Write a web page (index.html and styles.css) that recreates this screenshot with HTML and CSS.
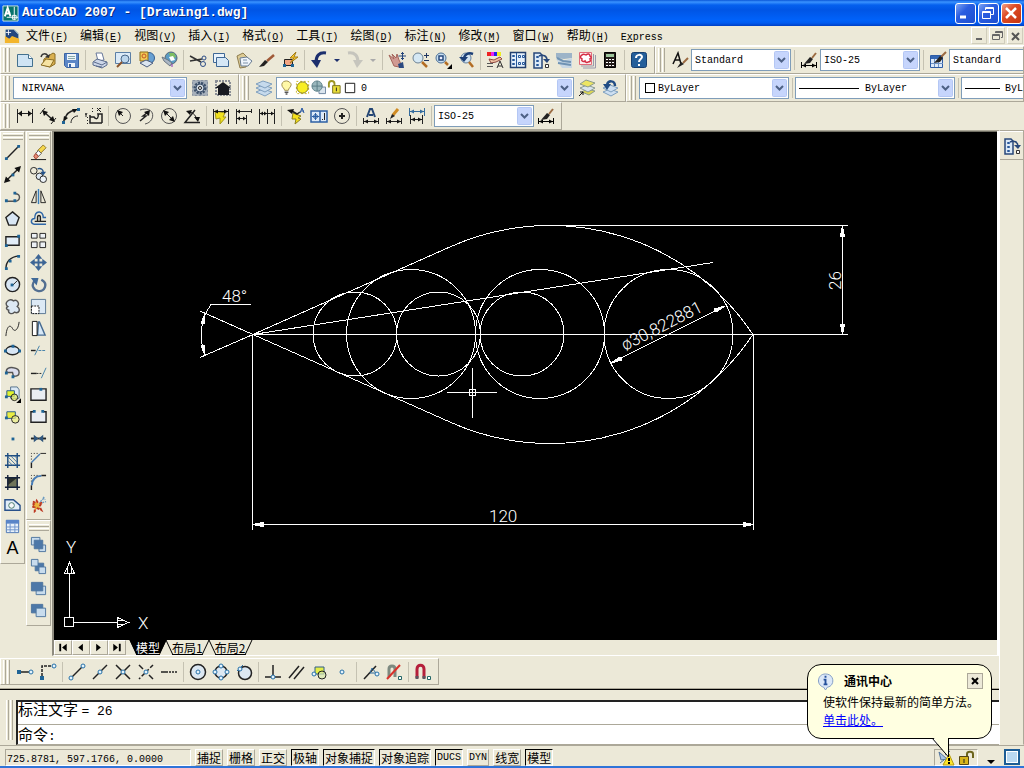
FILE: index.html
```html
<!DOCTYPE html>
<html lang="zh-CN">
<head>
  <meta charset="UTF-8">
  <meta name="viewport" content="width=device-width, initial-scale=1.0">
  <title>AutoCAD 2007 - [Drawing1.dwg]</title>
  <link rel="stylesheet" href="styles.css">
</head>
<body>
  <!-- Title bar -->
  <header class="titlebar">
    <svg class="app-icon" viewBox="0 0 18 18"><path fill="#08736c" stroke="#d7e9e4" d="M1 1h16v16H1z"/><path stroke="#fff" stroke-width="2" d="M3 12 6 3l3 9M4 9h5"/><path stroke="#fff" d="M13 2v14M5 13h12M11 11h4v4h-4z"/></svg>
    <h1>AutoCAD 2007 - [Drawing1.dwg]</h1>
    <div class="window-buttons">
      <button title="最小化"><svg viewBox="0 0 18 18"><path stroke="#fff" stroke-width="3" d="M4 13h6"/></svg></button>
      <button title="还原"><svg viewBox="0 0 18 18"><path stroke="#fff" d="M6.500 6V3.500h8v7H12M3.500 7.500h8v7h-8zM4 8.500h7M7 4.500h7"/></svg></button>
      <button class="close" title="关闭"><svg viewBox="0 0 18 18"><path stroke="#fff" stroke-width="2.500" d="m4 4 10 10M14 4 4 14"/></svg></button>
    </div>
  </header>

  <!-- Menu bar -->
  <nav class="menubar">
    <svg class="doc-icon" viewBox="0 0 18 18"><path fill="#fff" stroke="#9bb" d="M2 2h10l4 4v10H2z"/><path fill="#23477f" stroke="none" d="M2 2h9l5 5v5l-7-1-7 3z"/><path fill="#f3b52c" stroke="none" d="M1 17V9l5 3 3-3 8 3v5z"/><path stroke="#fff" d="M5 2v6M2 5h6"/></svg>
    <button>文件<span>(<u>F</u>)</span></button>
    <button>编辑<span>(<u>E</u>)</span></button>
    <button>视图<span>(<u>V</u>)</span></button>
    <button>插入<span>(<u>I</u>)</span></button>
    <button>格式<span>(<u>O</u>)</span></button>
    <button>工具<span>(<u>T</u>)</span></button>
    <button>绘图<span>(<u>D</u>)</span></button>
    <button>标注<span>(<u>N</u>)</span></button>
    <button>修改<span>(<u>M</u>)</span></button>
    <button>窗口<span>(<u>W</u>)</span></button>
    <button>帮助<span>(<u>H</u>)</span></button>
    <button><span>E<u>x</u>press</span></button>
    <div class="doc-buttons">
      <button title="最小化"><svg viewBox="0 0 14 14"><path stroke="#666" stroke-width="2" d="M4 10h6"/></svg></button>
      <button title="还原"><svg viewBox="0 0 14 14"><path stroke="#666" d="M5.500 4V2.500h7v6H11M2.500 5.500h7v5h-7zM3 6.500h6M6 3.500h6"/></svg></button>
      <button title="关闭"><svg viewBox="0 0 14 14"><path stroke="#555" stroke-width="2" d="m4 4 7 7M11 4l-7 7"/></svg></button>
    </div>
  </nav>

  <!-- Standard and styles toolbars -->
  <div class="toolbar-row">
    <div class="toolbar">
      <i class="grip"></i>
      <button title="新建"><svg viewBox="0 0 18 18"><path fill="#cfe4f4" stroke="#44718f" d="M1.500 3.500h11l4 4v8h-15z"/><path fill="#fff" stroke="#44718f" d="M12.500 3.500v4h4"/></svg></button>
      <button title="打开"><svg viewBox="0 0 18 18"><path fill="#d9b050" stroke="#8a6c22" d="m5 8 9-6 2 1v10l-5 3-7-2z"/><path fill="#f6e3a2" stroke="#8a6c22" d="m2 14 5-6 8 1-4 7z"/><path stroke="#333" stroke-width="1.500" d="M2 6c1-4 5-4 7-1"/><path fill="#333" stroke="none" d="m6 6 4 1 1-4z"/></svg></button>
      <button title="保存"><svg viewBox="0 0 18 18"><path fill="#5b86c6" stroke="#3a64a4" d="M2.500 2.500h14v14h-12l-2-2z"/><path fill="#eef4fa" stroke="none" d="M5 3h9v6H5zM6 12h7v4H6z"/><path stroke="#8aa" d="M6 5.500h7M6 7.500h7"/><path fill="#3a64a4" stroke="none" d="M7 13h2v3H7z"/></svg></button>
      <i class="sep"></i>
      <button title="打印"><svg viewBox="0 0 18 18"><path fill="#fff" stroke="#68789a" d="m5 2 6 0 2 7-6 1z"/><path fill="#ccd6e8" stroke="#5b6c8d" d="m2 11 4-3 10 3v3l-5 3-9-3z"/><path stroke="#5b6c8d" d="m3 11 8 3 5-3M5 15l6 1"/></svg></button>
      <button title="打印预览"><svg viewBox="0 0 18 18"><path fill="#dbeaf7" stroke="#5b7fa6" d="M1.500 1.500h15v11h-15z"/><circle cx="11" cy="8" r="4" fill="#bcd6ec" stroke="#48678a"/><path stroke="#8b542c" stroke-width="2" d="m8 11-5 5"/></svg></button>
      <button title="发布"><svg viewBox="0 0 18 18"><circle cx="12" cy="7" r="5.500" fill="#68a0d2" stroke="#345f92"/><path fill="#f2ca55" stroke="#8c6c1b" d="M3 1h8v9H3z"/><circle cx="7" cy="5" r="2" stroke="#c55525"/><path fill="#dbe5f0" stroke="#4d5f80" d="m3 12 6-3 7 3-6 4z"/></svg></button>
      <button title="三维 DWF"><svg viewBox="0 0 18 18"><circle cx="11" cy="7" r="6" fill="#5b9cc4" stroke="#567"/><path fill="#7ebd62" stroke="none" d="M9 2h5l2 4-5 2z"/><path fill="#fff" stroke="none" d="m9 6 4-1 2 4-4 1z"/><path fill="#aab6c4" stroke="#6d7782" d="m2 6 6 3 4 3-2 3-6-5z"/><path stroke="#83b" d="M12 13v3"/></svg></button>
      <i class="sep"></i>
      <button title="剪切"><svg viewBox="0 0 18 18"><path stroke="#333" stroke-width="1.500" d="m1 5 11 6M1 10l12-2"/><circle cx="15" cy="7" r="2" stroke="#2b4c86"/><circle cx="14" cy="13" r="2.500" stroke="#2b4c86"/></svg></button>
      <button title="复制"><svg viewBox="0 0 18 18"><path fill="#eaf3fb" stroke="#3f6896" d="M1.500 2.500h11v9h-11z"/><path fill="#d5e7f6" stroke="#3f6896" d="M4.500 6.500h9l3 3v6h-12z"/></svg></button>
      <button title="粘贴"><svg viewBox="0 0 18 18"><path fill="#ddcb94" stroke="#8e7c4d" d="m2 5 6-3 6 6-3 8-6 1z"/><path fill="#eef4fb" stroke="#697c92" d="m5 7 7-1 5 4-4 5-7 0z"/><path stroke="#7d91a8" d="m8 9 4 0M8 12l5 0"/></svg></button>
      <button title="特性匹配"><svg viewBox="0 0 18 18"><path stroke="#a05a38" stroke-width="2.500" d="m9 10 7-6"/><path fill="#222" stroke="none" d="m1 16 6-7 3 2-4 4z"/></svg></button>
      <button title="块编辑器"><svg viewBox="0 0 18 18"><path fill="#f2a583" stroke="#222" d="M3.500 8.500h8v6h-8z"/><path fill="#ffd02c" stroke="#a37b16" d="m15 1-6 6h4l-4 5 8-6h-4z"/><path class="node" d="M2 13h3v3H2zM10 13h3v3h-3z"/></svg></button>
      <i class="sep"></i>
      <button title="放弃"><svg viewBox="0 0 18 18"><path stroke="#1c2f6d" stroke-width="3" d="M16 2C9 1 6 5 6 11"/><path fill="#1c2f6d" stroke="none" d="M1 9h10l-4 8z"/></svg></button>
      <button class="drop" title="放弃列表"><svg viewBox="0 0 13 18"><path fill="#1c2f6d" stroke="none" d="M4 8h6L7 11z"/></svg></button>
      <button title="重做"><svg viewBox="0 0 18 18"><path stroke="#c6c5bd" stroke-width="3" d="M2 2c7-1 10 3 10 9"/><path fill="#c6c5bd" stroke="none" d="M7 9h10l-6 8z"/></svg></button>
      <button class="drop" title="重做列表"><svg viewBox="0 0 13 18"><path fill="#aaa" stroke="none" d="M4 8h6L7 11z"/></svg></button>
      <i class="sep"></i>
      <button title="实时平移"><svg viewBox="0 0 18 18"><path fill="#d09a92" stroke="#a5655c" d="m1 4 5 4-2-5 4 4 1-4 2 6 2 4-2 3-5-1z"/><path stroke="#24457b" d="M14.500 1v8M10.500 5h8M13 2.500h3M13 7.500h3"/><path fill="#2c4a80" stroke="none" d="m10 13 5-2 1 6h-5z"/></svg></button>
      <button title="实时缩放"><svg viewBox="0 0 18 18"><circle cx="7" cy="7" r="5" fill="#d5e8f4" stroke="#6c8294"/><path stroke="#b36d24" stroke-width="2.500" d="m11 11 5 5"/><path stroke="#1e3460" d="M15.500 2v5M13 4.500h5M13 9.500h5"/></svg></button>
      <button title="窗口缩放"><svg viewBox="0 0 18 18"><circle cx="7" cy="7" r="5" fill="#c9dff0" stroke="#4a6e95"/><path fill="#eef" stroke="#26497c" stroke-width="1.500" d="M5 5h4v4H5z"/><path stroke="#b36d24" stroke-width="2.500" d="m11 11 3 3"/><path fill="#000" stroke="none" d="M18 13v5h-5z"/></svg></button>
      <button title="缩放上一个"><svg viewBox="0 0 18 18"><circle cx="9" cy="7" r="5" fill="#d4e5f2" stroke="#65829f"/><path stroke="#1c3f77" stroke-width="2.500" d="M16 3C11 1 7 4 7 8"/><path fill="#1c3f77" stroke="none" d="M2 6h9l-4 5z"/><path stroke="#b36d24" stroke-width="2.500" d="m12 11 4 5"/></svg></button>
      <i class="sep"></i>
      <button title="特性"><svg viewBox="0 0 18 18"><path fill="#e22" stroke="none" d="M1 1h4v4H1z"/><path fill="#e2e" stroke="none" d="M5 1h3v4H5z"/><path fill="#22e" stroke="none" d="M8 1h3v4H8z"/><path fill="#ee2" stroke="none" d="M11 1h4v4h-4z"/><path fill="#efc2a2" stroke="#8f4740" d="m3 8 5 1 6-3 2 2-6 3-5 1z"/><path stroke="#555" d="M1 12.500h6M1 15.500h6"/><path stroke="#333" d="m11 17 3-7 3 7M12 15h4"/></svg></button>
      <button title="设计中心"><svg viewBox="0 0 18 18"><path fill="#e5f0fb" stroke="#23406f" stroke-width="1.500" d="M1.500 1.500h15v15h-15z"/><path stroke="#24579b" d="M7.500 2v14M3.500 4.500h2v1h-2zM3.500 8.500h2v1h-2zM3.500 12.500h2v1h-2zM9.500 4.500h2v2h-2zM13.500 4.500h2v2h-2zM9.500 11.500h2v2h-2zM13.500 11.500h2v2h-2z"/></svg></button>
      <button title="工具选项板"><svg viewBox="0 0 18 18"><path fill="#dceaf7" stroke="#28487a" stroke-width="1.500" d="M2 2h6l2 2v13H2z"/><path stroke="#28589a" d="M4.500 5.500h2v1h-2zM4.500 9.500h2v1h-2zM4.500 13.500h2v1h-2z"/><path stroke="#28487a" stroke-width="1.500" d="M7 5c4-2 8 0 8 4"/><path fill="#28487a" stroke="none" d="M11 8h7l-3 4z"/><path fill="#fff" stroke="#333" d="M13.500 13.500h3v3h-3z"/></svg></button>
      <button title="图纸集管理器"><svg viewBox="0 0 18 18"><path fill="#9db4c8" stroke="none" d="M1 2h16v5l-8 1-8-1z"/><path fill="#c8d7e4" stroke="none" d="m1 8 6 2 10-3v10H7z"/><path stroke="#6f93b4" stroke-width="2" d="m2 7 6 3 8 1M3 12l13 2"/></svg></button>
      <button title="标记集管理器"><svg viewBox="0 0 18 18"><path stroke="#99a" d="M17.500 4v13H5M15.500 3v12H3"/><path fill="#fbeced" stroke="#e06a78" d="M1.500 1.500h12v12h-12z"/><path fill="#fff" stroke="#d42c42" stroke-width="1.500" d="M4 4c2-2 3 0 4 0 2-2 4-1 4 1 2 1 1 3 0 3 1 2 0 3-2 3-1 1-3 0-3-1-2 1-4 0-3-2-2-1-2-3 0-4z"/></svg></button>
      <button title="快速计算器"><svg viewBox="0 0 18 18"><path fill="#221a18" stroke="#000" d="M3.500 1.500h11v15h-11z"/><path fill="#9dc49a" stroke="none" d="M5 3h8v3H5z"/><path stroke="#fff" stroke-dasharray="2 1" d="M5 8.500h8M5 11.500h8M5 14.500h8"/></svg></button>
      <i class="sep"></i>
      <button title="帮助"><svg viewBox="0 0 18 18"><rect x="1.500" y="1.500" width="15" height="15" rx="2" fill="#245f9a" stroke="#163f70"/><path stroke="#fff" stroke-width="2" d="M6 7c0-4 6-4 6-1 0 2-3 2-3 5M9 13v2"/></svg></button>
    </div>
    <div class="toolbar grow">
      <i class="grip"></i>
      <button title="文字样式"><svg viewBox="0 0 18 18"><path stroke="#111" stroke-width="1.500" d="m2 13 5-11 3 11M4 9h5"/><path stroke="#9b6a41" stroke-width="2" d="m17 7-5 5"/><path fill="#222" stroke="none" d="m6 17 4-6 3 2z"/></svg></button>
      <select class="w100" aria-label="文字样式"><option>Standard</option></select>
      <i class="sep"></i>
      <button title="标注样式"><svg viewBox="0 0 18 18"><path stroke="#9b6a41" stroke-width="2" d="m16 2-4 5"/><path fill="#222" stroke="none" d="m4 13 6-7 3 2-3 4z"/><path stroke="#000" d="M1.500 11v6M16.500 11v6M2 14.500h14"/><path fill="#000" stroke="none" d="m2 14.500 4-2v4zM16 14.500l-4-2v4z"/></svg></button>
      <select class="w100" aria-label="标注样式"><option>ISO-25</option></select>
      <i class="sep"></i>
      <button title="表格样式"><svg viewBox="0 0 18 18"><path fill="#dceafa" stroke="#2d5ca5" d="M1.500 4.500h12v12h-12z"/><path fill="#3568b5" stroke="none" d="M2 5h11v3H2z"/><path stroke="#6d92c5" d="M2 12.500h12M5.500 8v8M9.500 8v8"/><path stroke="#9b6a41" stroke-width="2" d="m17 1-5 5"/><path fill="#222" stroke="none" d="m5 12 6-7 3 2-3 4z"/></svg></button>
      <select class="w100" aria-label="表格样式"><option>Standard</option></select>
    </div>
  </div>

  <!-- Workspaces, layers and properties toolbars -->
  <div class="toolbar-row">
    <div class="toolbar">
      <i class="grip"></i>
      <select class="w174" aria-label="工作空间"><option>NIRVANA</option></select>
      <button class="after-field" title="工作空间设置"><svg viewBox="0 0 18 18"><path fill="#a5afba" stroke="#8b95a2" stroke-dasharray="3 1" d="M1.500 1.500h15v15h-15z"/><circle cx="9" cy="9" r="5" stroke="#3b4f69" stroke-width="3" stroke-dasharray="2 1"/><circle cx="9" cy="9" r="4" fill="#cfd8e2" stroke="#3b4f69"/><circle cx="9" cy="9" r="1.500" fill="#fff"/></svg></button>
      <button title="我的工作空间"><svg viewBox="0 0 18 18"><path stroke="#8b8f96" stroke-width="2" stroke-dasharray="2 1" d="M2 2h14v14H2z"/><path fill="#181a20" stroke="none" d="m1 9 8-6 8 6h-2v7H4V9z"/></svg></button>
    </div>
    <div class="toolbar">
      <i class="grip"></i>
      <button title="图层特性管理器"><svg viewBox="0 0 18 18"><g fill="#c6daec" stroke="#7f9fbe"><path d="m1 13 7-3 9 3-7 4z"/><path d="m1 9 7-3 9 3-7 4z"/><path d="m1 5 7-3 9 3-7 4z"/></g></svg></button>
      <div class="layer-field">
        <select aria-label="图层"><option>0</option></select>
        <div class="layer-state">
          <svg viewBox="0 0 16 16"><path fill="#fff8a8" stroke="#9b8b4c" d="M6 11c0-2-3-3-3-6s3-4 5-4 5 2 5 4-3 4-3 6z"/><path stroke="#555" stroke-width="1.500" d="M6 13h4M7 15h2"/></svg>
          <svg viewBox="0 0 16 16"><path stroke="#cbb523" stroke-dasharray="2 2" d="M1.500 1.500h13v13h-13z"/><circle cx="8" cy="8" r="6" fill="#f8ee24" stroke="#7c751d"/></svg>
          <svg viewBox="0 0 16 16"><path fill="#dbe5ee" stroke="#6c839e" d="M8.500 7.500h7v7h-7z"/><circle cx="6.500" cy="6.500" r="5.500" fill="#9ab7bd" stroke="#60838c"/><path stroke="#577c85" d="M6.500 1v11M1 6.500h11"/></svg>
          <svg viewBox="0 0 16 16"><path stroke="#9e9622" stroke-width="2" d="M2 8V4c0-4 6-4 6 0v3"/><path fill="#e8de39" stroke="#777020" d="M6 6h8v8H6z"/><path d="M10 8v4"/></svg>
          <svg viewBox="0 0 16 16"><path fill="#fff" stroke="#111" d="M2.500 3.500h10v10h-10z"/></svg>
        </div>
      </div>
      <button class="after-field" title="将对象的图层置为当前"><svg viewBox="0 0 18 18"><g stroke="#8a9a8f"><path fill="#ded752" d="m4 13 5-3 8 2-6 4z"/><path fill="#d9e4ef" d="m2 9 7-3 8 3-7 4z"/><path fill="#ece563" d="m2 5 6-4 9 3-7 4z"/></g><path stroke="#111" d="m1 17 4-4M2 13h3v3"/></svg></button>
      <button title="上一个图层"><svg viewBox="0 0 18 18"><g fill="#cddff1" stroke="#7e9fbe"><path d="m2 13 7-3 8 3-7 4z"/><path d="m2 9 7-3 8 3-7 4z"/></g><path stroke="#214c84" stroke-width="2.500" d="M14 7c0-6-7-6-8-1"/><path fill="#214c84" stroke="none" d="M2 5h8l-4 6z"/></svg></button>
    </div>
    <div class="toolbar grow">
      <i class="grip"></i>
      <div class="prop-field color"><select aria-label="颜色"><option>ByLayer</option></select><i></i></div>
      <i class="sep"></i>
      <div class="prop-field linetype"><select aria-label="线型"><option>ByLayer</option></select><i></i></div>
      <i class="sep"></i>
      <div class="prop-field lineweight"><select aria-label="线宽"><option>ByLayer</option></select><i></i></div>
    </div>
  </div>

  <!-- Dimension toolbar -->
  <div class="toolbar-row">
    <div class="toolbar">
      <i class="grip"></i>
      <button title="线性"><svg viewBox="0 0 18 18"><path d="M1.500 2v14M16.500 2v14M2 6.500h14"/><path fill="#111" stroke="none" d="m2 6.500 4-3v6zM16 6.500l-4-3v6z"/></svg></button>
      <button title="对齐"><svg viewBox="0 0 18 18"><path d="m1 7 5-6M12 17l5-6"/><path stroke-width="1.500" d="m5 5 9 8"/><path fill="#111" stroke="none" d="m3 3 6 2-4 4zM16 15l-6-2 4-4z"/></svg></button>
      <button title="弧长"><svg viewBox="0 0 18 18"><path stroke-width="1.500" d="M3 12C4 7 8 4 13 3"/><path d="M9 16c0-4 3-7 7-7"/><path fill="#111" stroke="none" d="m1 15 1-6 4 2zM16 2l-6 0 2 4z"/><path class="node" d="M0 14h3v3H0zM15 1h3v3h-3z"/></svg></button>
      <button title="坐标"><svg viewBox="0 0 18 18"><path stroke-width="1.500" d="M5 8v8h12M5 10h4c3 4 5 0 4-3h4v9"/><path stroke-dasharray="1 2" d="M7.500 1v6M2.500 10v7M15.500 1v5"/><path d="m0 6 1 2 1-2M1 8v2M12 1l3 3M15 1l-3 3"/></svg></button>
      <i class="sep"></i>
      <button title="半径"><svg viewBox="0 0 18 18"><circle cx="9" cy="9" r="7.500" stroke="#555"/><path d="m9 9-4-4"/><path fill="#111" stroke="none" d="m3 3 6 2-4 4z"/></svg></button>
      <button title="折弯"><svg viewBox="0 0 18 18"><path stroke="#555" d="M3 3c16-5 16 12 5 14"/><path stroke-width="1.500" d="M3 14l6-5H6l5-4"/><path fill="#111" stroke="none" d="m13 3-1 6-5-4z"/></svg></button>
      <button title="直径"><svg viewBox="0 0 18 18"><circle cx="9" cy="9" r="7.500" stroke="#555"/><path d="m5 5 8 8"/><path fill="#111" stroke="none" d="m3 3 6 2-4 4zM15 15l-6-2 4-4z"/></svg></button>
      <button title="角度"><svg viewBox="0 0 18 18"><path stroke-width="1.500" d="M17 15.500H2L12 3"/><path d="M7 5c4 1 6 4 7 8"/><path fill="#111" stroke="none" d="m3 4 6-1-2 5zM11 10h6l-2 5z"/></svg></button>
      <i class="sep"></i>
      <button title="快速标注"><svg viewBox="0 0 18 18"><path fill="#f0e01e" stroke="#a1951a" d="m3 4 10 2-2 4 3 0-6 7 0-6-4 1z"/><path d="M1.500 2v15M16.500 2v15M2 4.500h14"/><path fill="#111" stroke="none" d="m2 4.500 4-2v4zM16 4.500l-4-2v4z"/></svg></button>
      <button title="基线"><svg viewBox="0 0 18 18"><path d="M1.500 2v15M11.500 8v9M2 4.500h15M2 11.500h9M16.500 2v4"/><path fill="#111" stroke="none" d="m2 4.500 3-2v4zM2 11.500l3-2v4zM11 11.500l-3-2v4z"/></svg></button>
      <button title="连续"><svg viewBox="0 0 18 18"><path d="M1.500 2v15M9.500 2v15M16.500 2v15M2 6.500h14"/><path fill="#111" stroke="none" d="m2 6.500 3-2v4zM9 6.500l-3-2v4zM16 6.500l-3-2v4z"/></svg></button>
      <i class="sep"></i>
      <button title="快速引线"><svg viewBox="0 0 18 18"><path fill="#f4df1c" stroke="#8b801d" d="m6 6 8 3-3 2 3 1-6 5 1-5-4 0z"/><path stroke-width="1.500" d="m5 4 5 3 3-2"/><path fill="#111" stroke="none" d="m0 3 7-1-2 5z"/><path stroke="#2455a2" d="m13 6 2-5 2 5M14 4h3"/></svg></button>
      <button title="公差"><svg viewBox="0 0 18 18"><path fill="#dceaf8" stroke="#2c60a4" stroke-width="1.500" d="M1 4h16v11H1zM10 4v11"/><circle cx="5.500" cy="9.500" r="2" stroke="#2c60a4"/><path stroke="#2c60a4" d="M2 9.500h7M5.500 6v7"/><path d="M14.500 6v7M12 12.500h1"/></svg></button>
      <button title="圆心标记"><svg viewBox="0 0 18 18"><circle cx="9" cy="9" r="7.500" stroke="#555"/><path stroke-width="2" d="M9 6v6M6 9h6"/></svg></button>
      <i class="sep"></i>
      <button title="编辑标注"><svg viewBox="0 0 18 18"><path stroke="#244674" stroke-width="2" d="m5 10 3-8h2l3 8M7 8h4"/><path d="M1.500 11v6M16.500 11v6M2 14.500h14"/><path fill="#111" stroke="none" d="m2 14.500 4-2v4zM16 14.500l-4-2v4z"/></svg></button>
      <button title="编辑标注文字"><svg viewBox="0 0 18 18"><path stroke="#d08b23" stroke-width="3" d="m8 8 5-6"/><path fill="#222" stroke="none" d="m5 12 2-5 3 2z"/><path d="M1.500 11v6M16.500 11v6M2 14.500h14"/><path fill="#111" stroke="none" d="m2 14.500 4-2v4zM16 14.500l-4-2v4z"/></svg></button>
      <button title="标注更新"><svg viewBox="0 0 18 18"><path stroke="#356c9e" d="M1.500 1v8M16.500 1v8M2 4.500h14"/><path fill="#356c9e" stroke="none" d="m2 4.500 4-2v4zM16 4.500l-4-2v4z"/><path d="M2.500 8v9M14.500 8v9M3 12.500h11"/><path fill="#111" stroke="none" d="m3 12.500 4-2v4zM14 12.500l-4-2v4z"/></svg></button>
      <i class="sep"></i>
      <select class="w100" aria-label="标注样式控制"><option>ISO-25</option></select>
      <button title="标注样式"><svg viewBox="0 0 18 18"><path stroke="#9b6a41" stroke-width="2" d="m16 2-4 5"/><path fill="#222" stroke="none" d="m4 13 6-7 3 2-3 4z"/><path stroke="#000" d="M1.500 11v6M16.500 11v6M2 14.500h14"/><path fill="#000" stroke="none" d="m2 14.500 4-2v4zM16 14.500l-4-2v4z"/></svg></button>
    </div>
  </div>

  <div class="body">
    <main>
      <div class="workspace">
        <div class="dock">
          <!-- Draw toolbar -->
          <div class="toolbar vertical">
            <i class="grip"></i>
            <button title="直线"><svg viewBox="0 0 18 18"><path stroke-width="1.500" d="M3 15 15 3"/><path class="node" d="M1 14h3v3H1zM14 1h3v3h-3z"/></svg></button>
            <button title="构造线"><svg viewBox="0 0 18 18"><path stroke-width="1.500" d="M2 16 16 2"/><path fill="#111" stroke="none" d="m0 18 2-7 5 5zM18 0l-7 2 5 5z"/><path class="node" d="M8 8h3v3H8z"/></svg></button>
            <button title="多段线"><svg viewBox="0 0 18 18"><path stroke="#555" stroke-width="1.500" d="M2 14h9c7 0 7-8 1-8"/><path class="node" d="M1 12h3v3H1zM10 12h3v3h-3zM10 4h3v3h-3z"/></svg></button>
            <button title="正多边形"><svg viewBox="0 0 18 18"><path fill="#d8e6f4" stroke-width="1.500" d="m9 2 7 6-3 8H5L2 8z"/></svg></button>
            <button title="矩形"><svg viewBox="0 0 18 18"><path fill="#e2edf7" stroke-width="1.500" d="M2 5h14v9H2z"/><path class="node" d="M1 13h3v3H1zM14 3h3v3h-3z"/></svg></button>
            <button title="圆弧"><svg viewBox="0 0 18 18"><path stroke-width="1.500" d="M2 16C2 8 7 3 16 2"/><path class="node" d="M1 14h3v3H1zM5 6h3v3H5zM14 1h3v3h-3z"/></svg></button>
            <button title="圆"><svg viewBox="0 0 18 18"><circle cx="9" cy="9" r="7.500" fill="#d8e6f4" stroke-width="1.500"/><path d="m9 10 5-5"/><path class="node" d="M7 8h3v3H7z"/></svg></button>
            <button title="修订云线"><svg viewBox="0 0 18 18"><path fill="#dce8f3" stroke="#555" stroke-width="1.500" d="M4 9c-5-4 2-9 6-6 4-2 7 3 4 6 4 3 2 8-3 6-3 3-7 1-6-2-3-1-3-3-1-4z"/></svg></button>
            <button title="样条曲线"><svg viewBox="0 0 18 18"><path d="M2 17C3 5 7 5 9 9s6 2 7-7"/></svg></button>
            <button title="椭圆"><svg viewBox="0 0 18 18"><ellipse cx="9" cy="9" rx="7" ry="4.500" fill="#d8e6f4" stroke-width="1.500"/><path class="node" d="M0 8h3v3H0zM15 8h3v3h-3zM8 3h3v3H8z"/></svg></button>
            <button title="椭圆弧"><svg viewBox="0 0 18 18"><path fill="#dcdeee" stroke="#555" stroke-width="1.500" d="M3 9C1 5 6 3 10 4c8 1 8 9 0 9l-1-4z"/><path class="node" d="M1 8h3v3H1zM8 12h3v3H8z"/></svg></button>
            <button title="插入块"><svg viewBox="0 0 18 18"><path fill="#dbe9f5" stroke="#54708b" d="M7 1h7l2 3v9H7z"/><path fill="#dff22c" stroke="#24578f" d="M3 5h8v6H3z"/><circle cx="11" cy="12" r="3.500" fill="#e7ee63" fill-opacity=".7"/><path class="node" d="M1 10h3v3H1z"/><path fill="#000" stroke="none" d="M18 13v5h-5z"/></svg></button>
            <button title="创建块"><svg viewBox="0 0 18 18"><path fill="#e9ed42" stroke="#24578f" d="M3 4h9v7H3z"/><circle cx="12" cy="12" r="4" fill="#eef086" fill-opacity=".7"/><path class="node" d="M1 9h3v3H1z"/></svg></button>
            <button title="点"><svg viewBox="0 0 18 18"><path class="node" d="M8 8h3v3H8z"/></svg></button>
            <button title="图案填充"><svg viewBox="0 0 18 18"><path stroke="#1d4c81" stroke-width="1.500" d="M4 1v16M14 1v16M1 4h16M1 14h16"/><path stroke="#43729e" d="m4 9 5 5M4 5l9 9M7 4l7 7M11 4l3 3"/></svg></button>
            <button title="渐变色"><svg viewBox="0 0 18 18"><path fill="#6f745a" stroke="none" d="M4 4h10v10H4z"/><path fill="#292f2b" stroke="none" d="M4 4h10L4 12z"/><path stroke="#15223a" stroke-width="1.500" d="M4 1v16M14 1v16M1 4h16M1 14h16"/></svg></button>
            <button title="面域"><svg viewBox="0 0 18 18"><path fill="#e2eef8" stroke="#29518a" stroke-width="1.500" d="M1 4h9l7 6v5H1z"/><circle cx="8" cy="10" r="3" fill="#f6f8fa" stroke="#476"/></svg></button>
            <button title="表格"><svg viewBox="0 0 18 18"><path fill="#e9f2fa" stroke="#4b76b5" d="M2.500 2.500h13v13h-13z"/><path fill="#5985c8" stroke="none" d="M2 2h14v4H2z"/><path stroke="#6c93cb" d="M2 9.500h14M2 12.500h14M6.500 6v9M11.500 6v9"/></svg></button>
            <button class="mtext" title="多行文字">A</button>
          </div>
          <div class="dock-column">
            <!-- Modify toolbar -->
            <div class="toolbar vertical">
              <i class="grip"></i>
              <button title="删除"><svg viewBox="0 0 18 18"><path stroke="#111" d="M1 16.500h16"/><path fill="#f6d84d" stroke="#8e762a" d="m8 7 6-6 3 3-7 7z"/><path fill="#fff" stroke="#555" d="m6 10 3-3 3 3-3 3z"/><path fill="#e58c76" stroke="#a33a29" d="m4 13 2-3 3 3-3 3z"/></svg></button>
              <button title="复制对象"><svg viewBox="0 0 18 18"><circle cx="4" cy="5" r="3.500"/><circle cx="10" cy="11" r="3.500" fill="#dde8f3"/><circle cx="14" cy="14" r="3.500" fill="#edf3f8"/><path stroke="#245289" stroke-width="1.500" d="M8 3c4-1 6 1 6 4"/><path fill="#245289" stroke="none" d="M11 6h6l-3 4z"/></svg></button>
              <button title="镜像"><svg viewBox="0 0 18 18"><path d="M6.500 3v12.500h-5zM11.500 3v12.500h5z"/><path stroke="#387ebb" stroke-width="1.500" d="M9 1v16"/></svg></button>
              <button title="偏移"><svg viewBox="0 0 18 18"><path stroke="#2e66a7" stroke-width="1.500" d="M17 15H4c-4-1-3-6 1-6 0-9 9-9 9-1h3"/><path stroke="#222" stroke-width="1.500" d="M17 12H5M8 12V8c0-3 3-3 3 0v4"/></svg></button>
              <button title="阵列"><svg viewBox="0 0 18 18"><path fill="#edf1f5" d="M1.500 1.500h6v5h-6zM10.500 1.500h6v5h-6zM1.500 10.500h6v6h-6zM10.500 10.500h6v6h-6z"/></svg></button>
              <button title="移动"><svg viewBox="0 0 18 18"><path stroke="#3d6595" stroke-width="2" d="M9 3v12M3 9h12"/><path fill="#3d6595" stroke="none" d="m9 0 4 5H5zM9 18l4-5H5zM0 9l5-4v8zM18 9l-5-4v8z"/></svg></button>
              <button title="旋转"><svg viewBox="0 0 18 18"><path stroke="#536f91" stroke-width="2.500" d="M12 4c8 4 3 13-3 12S1 9 5 5"/><path fill="#416a98" stroke="none" d="M1 2h8l-2 8z"/></svg></button>
              <button title="缩放"><svg viewBox="0 0 18 18"><path fill="#dce9f5" stroke="#587693" d="M1.500 1.500h15v15h-15z"/><path fill="#fff" stroke="#111" stroke-dasharray="2 1" d="M1.500 8.500h8v8h-8z"/></svg></button>
              <button title="拉伸"><svg viewBox="0 0 18 18"><path fill="#d7e8f7" stroke="#466b92" stroke-width="1.500" d="M9 2h1l6 14H8z"/><path fill="#fff" stroke="#111" d="M2.500 1.500h5v15h-5z"/></svg></button>
              <button title="修剪"><svg viewBox="0 0 18 18"><path stroke-width="1.500" d="M1 9h5"/><path stroke="#427fa9" d="m5 14 5-10"/><path stroke="#427fa9" stroke-dasharray="3 1" d="M9 9h8"/></svg></button>
              <button title="延伸"><svg viewBox="0 0 18 18"><path stroke-width="1.500" d="M1 10h6"/><path stroke-dasharray="2 1" d="M7 10h6"/><path stroke="#427fa9" d="m12 15 5-11"/></svg></button>
              <button title="打断于点"><svg viewBox="0 0 18 18"><path fill="#e9edf2" stroke-width="1.500" d="M1 3h16v12H1z"/><path class="node" d="M10 2h3v3h-3z"/></svg></button>
              <button title="打断"><svg viewBox="0 0 18 18"><path fill="#e9edf2" stroke-width="1.500" d="M4 4H1v11h16V4h-3"/><path class="node" d="M3 2h3v3H3zM12 2h3v3h-3z"/></svg></button>
              <button title="合并"><svg viewBox="0 0 18 18"><path stroke-width="2" d="M1 9h16"/><path fill="#31567c" stroke="none" d="m4 5 5 4-5 4zM14 5 9 9l5 4z"/></svg></button>
              <button title="倒角"><svg viewBox="0 0 18 18"><path stroke="#111" stroke-dasharray="1 2" d="M1.500 8V1.500h8"/><path stroke-width="1.500" d="M1.500 17v-6"/><path stroke="#497eb7" stroke-width="1.500" d="m1.500 11 9-9"/><path d="M11 1.500h6"/></svg></button>
              <button title="圆角"><svg viewBox="0 0 18 18"><path stroke="#111" stroke-dasharray="1 2" d="M1.500 8V1.500h8"/><path stroke-width="1.500" d="M1.500 17v-5M12 1.500h5"/><path stroke="#497eb7" stroke-width="2" d="M2 12C2 6 6 2 12 2"/></svg></button>
              <button title="分解"><svg viewBox="0 0 18 18"><path fill="#e8b33c" stroke="#bd3823" stroke-width="2" stroke-dasharray="3 2" d="m3 6 3 1 1-2 2 3 4-1-3 4 2 4-4-2-3 3v-4l-3-1 2-2z"/><path stroke="#6d9bc0" stroke-dasharray="2 1" stroke-width="1.500" d="m11 6 4-4M13 7l4-1M14 1l2 3"/></svg></button>
            </div>
            <!-- Draw order toolbar -->
            <div class="toolbar vertical order">
              <i class="grip"></i>
              <button title="前置"><svg viewBox="0 0 18 18"><g stroke="#4e759e"><path fill="#c8dced" d="M1.500 1.500h9v8h-9zM9.500 9.500h7v7h-7z"/><path fill="#4d78a8" d="M4.500 4.500h9v9h-9z"/></g></svg></button>
              <button title="后置"><svg viewBox="0 0 18 18"><g stroke="#4e759e"><path fill="#4d78a8" d="M5.500 5.500h9v8h-9z"/><path fill="#c8dced" d="M1.500 1.500h7v7h-7zM9.500 9.500h7v7h-7z"/></g></svg></button>
              <button title="置于对象之上"><svg viewBox="0 0 18 18"><g stroke="#4e759e"><path fill="#c8dced" d="M6.500 6.500h10v9h-10z"/><path fill="#4d78a8" d="M1.500 2.500h12v9h-12z"/></g></svg></button>
              <button title="置于对象之下"><svg viewBox="0 0 18 18"><g stroke="#4e759e"><path fill="#4d78a8" d="M1.500 2.500h12v9h-12z"/><path fill="#c8dced" d="M6.500 6.500h10v9h-10z"/></g></svg></button>
            </div>
          </div>
        </div>

        <div class="drawing">
          <!-- Model space -->
          <svg class="canvas">
            <g transform="translate(-54 -132)">
              <!-- outline, axis and chord -->
              <path d="M753 334.500A243.500 243.500 0 0 0 451 246.500L253 334.500 451 422.500A243.500 243.500 0 0 0 753 334.500"/>
              <path d="M253 334.500h595M253 334.500 713 262.500"/>
              <circle cx="411" cy="334" r="64.500"/>
              <circle cx="540" cy="334" r="64.500"/>
              <circle cx="668.500" cy="334" r="64.500"/>
              <circle cx="355" cy="334" r="42"/>
              <circle cx="438.500" cy="334" r="42"/>
              <circle cx="522" cy="334" r="42"/>

              <!-- linear dimensions -->
              <path d="M252.500 335v195M753.500 335v195M253 524.500h500M550 225.500h298M842.500 226v108"/>
              <path class="solid" d="m253 524.500 10-2v4zM753 524.500l-10-2v4zM842.500 226l-2 10h4zM842.500 334l-2-10h4z"/>
              <text x="489" y="522">120</text>
              <text transform="translate(841 290) rotate(-90)">26</text>

              <!-- angle dimension -->
              <path d="M253 334.500 200 311M253 334.500 200 357.500M251 304.500h-40A52 52 0 0 0 205.500 355.500"/>
              <path class="solid" d="m205 314-4 9 3 1zM205 355l-4-9 3-1z"/>
              <text x="222" y="302">48°</text>

              <!-- diameter dimension -->
              <path d="M611 363 725 306"/>
              <path class="solid" d="m611 363 9-6 2 3zM725 306l-9 6-2-3z"/>
              <text transform="translate(625 351) rotate(-27)">ø30,822881</text>

              <!-- cursor -->
              <path d="M447 392.500h50M472.500 368v50M469.500 389.500h6v6h-6z"/>

              <!-- UCS icon -->
              <path d="M64.500 617.500h9v9h-9zM74 622.500h43M69.500 617v-44M117.500 617.500l11 5-11 5zM64.500 573.500l5-11 5 11zM67.500 573v-5M71.500 573v-5M118 620.500h5M118 624.500h5"/>
              <text x="66" y="553">Y</text>
              <text x="138" y="629">X</text>
            </g>
          </svg>
          <div class="tabs">
            <div class="tab-scroll">
              <button title="第一个"><svg viewBox="0 0 16 14"><path fill="#000" stroke="none" d="M4 3h2v8H4zM12 3v8L7 7z"/></svg></button>
              <button title="上一个"><svg viewBox="0 0 16 14"><path fill="#000" stroke="none" d="M10 3v8L5 7z"/></svg></button>
              <button title="下一个"><svg viewBox="0 0 16 14"><path fill="#000" stroke="none" d="M5 3v8l5-4z"/></svg></button>
              <button title="最后一个"><svg viewBox="0 0 16 14"><path fill="#000" stroke="none" d="M4 3v8l5-4zM10 3h2v8h-2z"/></svg></button>
            </div>
            <button class="tab active">模型</button>
            <button class="tab">布局1</button>
            <button class="tab">布局2</button>
          </div>
        </div>
      </div>

      <!-- Object snap toolbar -->
      <div class="toolbar-row snap">
        <div class="toolbar">
          <i class="grip"></i>
          <button title="临时追踪点"><svg viewBox="0 0 18 18"><path stroke-width="1.500" d="M3 9h10"/><path class="node" d="M1 7h4v4H1z"/><circle class="snap-mark" cx="15" cy="9" r="2"/></svg></button>
          <button title="捕捉自"><svg viewBox="0 0 18 18"><path stroke-dasharray="3 1" stroke-width="1.500" d="M3 13V3h11"/><path class="node" d="M1 13h4v4H1z"/><circle class="snap-mark" cx="15" cy="3" r="2"/></svg></button>
          <i class="sep"></i>
          <button title="端点"><svg viewBox="0 0 18 18"><path stroke-width="1.500" d="M3 15 15 3"/><circle class="snap-mark" cx="3" cy="15" r="2"/><circle class="snap-mark" cx="15" cy="3" r="2"/></svg></button>
          <button title="中点"><svg viewBox="0 0 18 18"><path stroke-width="1.500" d="M2 16 16 2"/><circle class="snap-mark" cx="9" cy="9" r="2"/></svg></button>
          <button title="交点"><svg viewBox="0 0 18 18"><path stroke-width="1.500" d="m2 2 14 14M16 2 2 16"/><circle class="snap-mark" cx="9" cy="9" r="2"/></svg></button>
          <button title="外观交点"><svg viewBox="0 0 18 18"><path stroke-width="1.500" d="m2 2 4 4M12 12l4 4"/><path stroke-width="1.500" stroke-dasharray="4 2" d="M16 2 2 16"/><circle class="snap-mark" cx="9" cy="9" r="2"/></svg></button>
          <button title="延长线"><svg viewBox="0 0 18 18"><path stroke-width="1.500" d="M1 9h7"/><path stroke-width="1.500" stroke-dasharray="2 1" d="M9 9h8"/></svg></button>
          <i class="sep"></i>
          <button title="圆心"><svg viewBox="0 0 18 18"><circle cx="9" cy="9" r="7.500" fill="#dce8f2" stroke-width="1.500"/><circle class="snap-mark" cx="9" cy="9" r="2"/></svg></button>
          <button title="象限点"><svg viewBox="0 0 18 18"><circle cx="9" cy="9" r="6" fill="#dce8f2" stroke-width="1.500"/><circle class="snap-mark" cx="9" cy="3" r="2"/><circle class="snap-mark" cx="9" cy="15" r="2"/><circle class="snap-mark" cx="3" cy="9" r="2"/><circle class="snap-mark" cx="15" cy="9" r="2"/></svg></button>
          <button title="切点"><svg viewBox="0 0 18 18"><circle cx="10" cy="10" r="6.500" fill="#dce8f2" stroke-width="1.500"/><path stroke="#2c6aa0" d="M2 8 8 2"/><circle class="snap-mark" cx="5" cy="6" r="2"/></svg></button>
          <i class="sep"></i>
          <button title="垂足"><svg viewBox="0 0 18 18"><path stroke-width="1.500" d="M9 2v12M1 14h16"/><circle class="snap-mark" cx="9" cy="14" r="2"/></svg></button>
          <button title="平行线"><svg viewBox="0 0 18 18"><path stroke-width="1.500" d="M2 15 12 3M7 16 17 4"/></svg></button>
          <button title="插入点"><svg viewBox="0 0 18 18"><path fill="#e4ed49" stroke="#315f88" d="M5 4h9v7H5z"/><circle cx="12" cy="12" r="4" fill="#d8e8ac" fill-opacity=".7"/><circle class="snap-mark" cx="4" cy="11" r="2"/></svg></button>
          <button title="节点"><svg viewBox="0 0 18 18"><circle class="snap-mark" cx="9" cy="9" r="2"/></svg></button>
          <i class="sep"></i>
          <button title="最近点"><svg viewBox="0 0 18 18"><path stroke-width="1.500" d="M2 16 14 3"/><path stroke="#2c6aa0" d="m8 10 2-5 4 5z"/><circle class="snap-mark" cx="15" cy="11" r="2"/></svg></button>
          <button title="无捕捉"><svg viewBox="0 0 18 18"><path stroke="#7d8a80" stroke-width="3" d="M4 14V6c0-4 6-4 6 0v8"/><path stroke="#d8322b" stroke-width="2" d="M2 16 15 2"/><path fill="#fff" stroke="#266" d="M13.500 13.500h3v3h-3z"/></svg></button>
          <i class="sep"></i>
          <button title="对象捕捉设置"><svg viewBox="0 0 18 18"><path stroke="#b51f3b" stroke-width="3" d="M3 15V6c0-5 7-5 7 0v9"/><path stroke="#5a5460" stroke-width="3" d="M3 13v3M10 13v3"/><path fill="#fff" stroke="#266" d="M13.500 13.500h3v3h-3z"/></svg></button>
        </div>
      </div>

      <!-- Command line -->
      <section class="command">
        <i class="grip"></i>
        <div class="command-text">
          <p>标注文字 <span>= 26</span></p>
          <div class="prompt">
            <label for="command-input">命令<span>:</span></label>
            <input type="text" id="command-input" autocomplete="off">
          </div>
        </div>
      </section>
    </main>

    <aside class="side-dock">
      <button title="工具选项板"><svg viewBox="0 0 18 18"><path fill="#dceaf7" stroke="#28487a" stroke-width="1.500" d="M2 2h6l2 2v13H2z"/><path stroke="#28589a" d="M4.500 5.500h2v1h-2zM4.500 9.500h2v1h-2zM4.500 13.500h2v1h-2z"/><path stroke="#28487a" stroke-width="1.500" d="M7 5c4-2 8 0 8 4"/><path fill="#28487a" stroke="none" d="M11 8h7l-3 4z"/><path fill="#fff" stroke="#333" d="M13.500 13.500h3v3h-3z"/></svg></button>
    </aside>
  </div>

  <!-- Status bar -->
  <footer class="statusbar">
    <output class="coords">725.8781, 597.1766, 0.0000</output>
    <div class="modes">
      <button>捕捉</button>
      <button>栅格</button>
      <button>正交</button>
      <button class="on">极轴</button>
      <button class="on">对象捕捉</button>
      <button class="on">对象追踪</button>
      <button class="on latin">DUCS</button>
      <button class="latin">DYN</button>
      <button>线宽</button>
      <button class="on">模型</button>
    </div>
    <div class="tray">
      <button title="通讯中心"><svg viewBox="0 0 18 16"><path fill="#a9c3e3" stroke="#52749c" d="m2 2 8 7-6 1zM8 5l5-4M3 13l4-3"/><path fill="#ffe52b" stroke="#b39b15" d="m12 4 5 11H6z"/><path stroke="#000" stroke-width="2" d="M12 8v3M12 12v2"/></svg></button>
      <button title="工具栏锁定"><svg viewBox="0 0 18 16"><path stroke="#6d651d" stroke-width="2" d="M10 7V4c0-3 6-3 6 0v4"/><path fill="#d7b41c" stroke="#554515" d="M2.500 6.500h9v8h-9z"/><path d="M7 9v4"/></svg></button>
    </div>
    <button class="tray-menu" title="状态栏菜单"><svg viewBox="0 0 18 16"><path fill="#000" stroke="none" d="M5 10h8l-4 4z"/></svg></button>
    <button class="clean-screen" title="全屏显示"></button>
  </footer>

  <!-- Communication center notice -->
  <div class="balloon" role="status">
    <div class="balloon-head">
      <svg viewBox="0 0 18 18"><path fill="#dce8f8" stroke="#7e9ac3" d="M9 1c10 0 10 13 2 14l-2 3-2-3C-1 13 0 1 9 1z"/><path stroke="#24509b" stroke-width="2" d="M9 3v2M7 7h2v5M7 12h4"/></svg>
      <h2>通讯中心</h2>
      <button title="关闭"><svg viewBox="0 0 14 14"><path stroke="#000" stroke-width="2" d="m4 4 6 6M10 4l-6 6"/></svg></button>
    </div>
    <p>使软件保持最新的简单方法。</p>
    <a href="#">单击此处。</a>
    <svg class="tail" viewBox="0 0 18 20"><path fill="#ffffe1" stroke="none" d="M1-1h15v20z"/><path stroke="#000" d="m0 0 16.500 19V0"/></svg>
  </div>
</body>
</html>
```
FILE: styles.css
```css
* {
  box-sizing: border-box;
}

body {
  display: flex;
  flex-direction: column;
  height: 100vh;
  margin: 0;
  overflow: hidden;
  background: #ece9d8;
  color: #000;
  font-family: "Noto Sans CJK SC", sans-serif;
  font-size: 12px;
  line-height: 16px;
}

button, select, input {
  margin: 0;
  padding: 0;
  border: 0;
  border-radius: 0;
  background: none;
  color: inherit;
  font: inherit;
}

h1, h2, p {
  margin: 0;
  font-size: 12px;
}

svg {
  display: block;
  flex: none;
  fill: none;
  stroke: #222;
}

/* Title bar */
.titlebar {
  display: flex;
  flex: none;
  align-items: center;
  height: 26px;
  padding: 0 2px;
  background: linear-gradient(#0a56d8, #3a93ff 2px, #0560ee 5px, #0055e5 10px, #0062fa 20px, #005bf0 23px, #003fc4);
}

.app-icon {
  width: 17px;
  height: 17px;
}

.titlebar h1 {
  flex: 1;
  margin-left: 3px;
  color: #fff;
  font: bold 13px/20px "Liberation Mono", monospace;
  text-shadow: 1px 1px #0a2a80;
  white-space: nowrap;
}

.window-buttons {
  display: flex;
  gap: 2px;
}

.window-buttons button {
  width: 21px;
  height: 21px;
  border: 1px solid #fff;
  border-radius: 3px;
  background: linear-gradient(135deg, #7da4f4, #2a5de0 40%, #1d4fd0);
}

.window-buttons .close {
  background: linear-gradient(135deg, #f0a088, #dd4a24 40%, #c43510);
}

.window-buttons svg {
  width: 18px;
  height: 18px;
}

/* Menu bar */
.menubar {
  display: flex;
  flex: none;
  align-items: center;
  height: 20px;
  padding: 0 1px 0 4px;
  border-bottom: 1px solid #fff;
}

.doc-icon {
  width: 16px;
  height: 16px;
}

.menubar > button {
  padding: 2px 6px 0;
  white-space: nowrap;
}

.menubar span,
.latin {
  font-family: "Liberation Mono", monospace;
  font-size: 10px;
}

.doc-buttons {
  display: flex;
  gap: 2px;
  margin-left: auto;
}

.doc-buttons button {
  width: 16px;
  height: 17px;
  border: 1px solid;
  border-color: #fff #d0cdbc #d0cdbc #fff;
}

.doc-buttons svg {
  width: 14px;
  height: 14px;
}

/* Toolbars */
.toolbar-row {
  display: flex;
  flex: none;
  height: 28px;
}

.toolbar {
  display: flex;
  flex: none;
  align-items: center;
  padding-right: 4px;
  border: 1px solid;
  border-color: #fff #aca899 #aca899 #fff;
}

.toolbar.grow {
  flex: 1;
  min-width: 0;
  overflow: hidden;
}

.toolbar button {
  display: flex;
  flex: none;
  align-items: center;
  justify-content: center;
  width: 23px;
  height: 22px;
}

.toolbar .drop {
  width: 13px;
}

.toolbar .after-field,
.layer-field {
  margin-left: 1px;
}

.toolbar svg,
.side-dock svg {
  width: 18px;
  height: 18px;
}

.vertical svg {
  width: 17px;
  height: 17px;
}

.toolbar .drop svg {
  width: 13px;
}

.node {
  fill: #1f6496;
  stroke: none;
}

.snap-mark {
  fill: #e5f3fc;
  stroke: #2671a8;
}

.grip {
  flex: none;
  width: 7px;
  height: 24px;
  margin: 0 3px 0 2px;
  background: linear-gradient(to right, #fff 1px, #ece9d8 1px 2px, #aca899 2px 3px, #ece9d8 3px 4px, #fff 4px 5px, #ece9d8 5px 6px, #aca899 6px);
}

.sep {
  flex: none;
  width: 1px;
  height: 20px;
  margin: 0 2px 0 3px;
  background: #c5c2b2;
}

/* Drop-down fields */
select {
  flex: none;
  height: 22px;
  padding: 2px 18px 0 3px;
  border: 1px solid #7f9db9;
  appearance: none;
  background: #fff url("data:image/svg+xml,%3Csvg xmlns='http://www.w3.org/2000/svg' width='15' height='18'%3E%3Crect x='.5' y='.5' width='14' height='17' rx='1' fill='%23c6d5fc' stroke='%23b4c7f4'/%3E%3Cpath d='m4 7 3.500 3.500L11 7' fill='none' stroke='%234d6185' stroke-width='2'/%3E%3C/svg%3E") no-repeat right 1px center;
  font-family: "Liberation Mono", monospace;
  font-size: 10px;
}

.w100 {
  width: 100px;
}

.w174 {
  width: 174px;
  padding-left: 8px;
}

.layer-field,
.prop-field {
  position: relative;
  flex: none;
}

.layer-field select {
  display: block;
  width: 298px;
  padding-left: 84px;
}

.prop-field select {
  display: block;
}

.layer-state {
  position: absolute;
  top: 3px;
  left: 3px;
  display: flex;
  gap: 1px;
  pointer-events: none;
}

.toolbar .layer-state svg {
  width: 15px;
  height: 15px;
}

.prop-field i {
  position: absolute;
  top: 11px;
  left: 4px;
  border-top: 1px solid #000;
  pointer-events: none;
}

.color select {
  width: 150px;
  padding-left: 18px;
}

.prop-field.color i {
  top: 6px;
  left: 6px;
  width: 10px;
  height: 10px;
  border: 1px solid #000;
}

.linetype select {
  width: 160px;
  padding-left: 69px;
}

.linetype i {
  width: 60px;
}

.lineweight select {
  width: 150px;
  padding-left: 43px;
}

.lineweight i {
  width: 35px;
}

/* Body */
.body {
  display: flex;
  flex: 1;
  min-height: 0;
}

main {
  display: flex;
  flex: 1;
  flex-direction: column;
  min-width: 0;
}

.workspace {
  display: flex;
  flex: 1;
  min-height: 0;
  border-top: 1px solid #aca899;
}

.dock {
  display: flex;
  flex: none;
  align-items: flex-start;
  gap: 1px;
  width: 52px;
}

.vertical {
  flex-direction: column;
  width: 25px;
  padding: 0 0 4px;
}

.vertical .grip {
  width: 20px;
  height: 7px;
  margin: 1px 0;
  background: linear-gradient(#fff 1px, #ece9d8 1px 2px, #aca899 2px 3px, #ece9d8 3px 4px, #fff 4px 5px, #ece9d8 5px 6px, #aca899 6px);
}

.vertical.order .grip {
  margin: 3px 0 2px;
}

.toolbar .mtext {
  font: 18px/22px "Liberation Sans", sans-serif;
}

.drawing {
  display: flex;
  flex: 1;
  flex-direction: column;
  min-width: 0;
  border-left: 2px solid #8f8c80;
  border-right: 2px solid #fff;
  border-bottom: 1px solid #fff;
}

.canvas {
  flex: 1;
  width: 100%;
  min-height: 0;
  border-top: 1px solid #716f64;
  background: #000;
  shape-rendering: crispEdges;
  stroke: #fff;
}

.canvas .solid {
  fill: #fff;
}

.canvas text {
  fill: #fff;
  stroke: none;
  font-family: Roboto, sans-serif;
  font-size: 17px;
  font-weight: 300;
}

/* Layout tabs */
.tabs {
  display: flex;
  flex: none;
  height: 15px;
}

.tab-scroll {
  display: flex;
  margin-right: 4px;
}

.tab-scroll button {
  width: 18px;
  border: 1px solid;
  border-color: #fff #aca899 #aca899 #fff;
}

.tab-scroll svg {
  width: 16px;
  height: 13px;
}

.tab {
  position: relative;
  z-index: 0;
  padding: 0 6px;
  line-height: 12px;
  white-space: nowrap;
}

.tab::before,
.tab::after {
  content: "";
  position: absolute;
  z-index: -1;
  top: 0;
  bottom: 0;
  border-bottom: 1px solid #000;
}

.tab::before {
  left: 3px;
  right: 35%;
  border-left: 1px solid #000;
  transform: skewX(25deg);
}

.tab::after {
  left: 35%;
  right: 3px;
  border-right: 1px solid #000;
  transform: skewX(-25deg);
}

.tab.active {
  color: #fff;
}

.tab.active::before,
.tab.active::after {
  background: #000;
}

/* Object snap toolbar */
.snap {
  height: 33px;
  padding: 2px 0 3px;
  border-bottom: 1px solid #aca899;
}

/* Command line */
.command {
  display: flex;
  flex: none;
  height: 56px;
  padding-top: 10px;
  border-top: 1px solid #000;
}

.command .grip {
  height: 40px;
  margin: 0 3px 0 6px;
}

.command-text {
  flex: 1;
  border-top: 2px solid #222;
  border-left: 2px solid #222;
  border-bottom: 1px solid #aca899;
  background: #fff;
}

.command p,
.prompt {
  height: 22px;
  font-size: 15px;
  line-height: 14px;
}

.command span {
  font-family: "Liberation Mono", monospace;
  font-size: 13px;
}

.prompt {
  display: flex;
  padding-top: 2px;
  border-top: 1px solid #aca899;
}

.prompt input {
  flex: 1;
  outline: 0;
}

/* Right dock */
.side-dock {
  flex: none;
  width: 25px;
  border: 1px solid;
  border-color: #aca899 #aca899 #ece9d8 #fff;
}

.side-dock button {
  display: flex;
  align-items: center;
  justify-content: center;
  width: 100%;
  height: 29px;
  border-top: 1px solid #fff;
  border-bottom: 1px solid #aca899;
}

/* Status bar */
.statusbar {
  display: flex;
  flex: none;
  gap: 4px;
  height: 23px;
  padding: 3px 4px 0 5px;
  border-top: 1px solid #aca899;
  border-bottom: 2px solid #2f74d8;
}

.coords {
  width: 186px;
  padding: 2px 1px 0;
  border: 1px solid;
  border-color: #aca899 #fff #fff #aca899;
  font: 10px/16px "Liberation Mono", monospace;
  white-space: nowrap;
}

.modes {
  display: flex;
  gap: 4px;
}

.modes button {
  padding: 0 1px;
  border: 1px solid;
  border-color: #fff #aca899 #aca899 #fff;
  white-space: nowrap;
}

.modes .on {
  border-color: #000 #fff #fff #000;
}

.tray {
  display: flex;
  gap: 2px;
  margin-left: auto;
  padding: 0 2px;
  border: 1px solid;
  border-color: #aca899 #fff #fff #aca899;
}

.tray svg,
.tray-menu svg {
  width: 18px;
  height: 16px;
}

.clean-screen {
  width: 16px;
  height: 16px;
  border: 2px solid #1c5c95;
  background: #b9d8f1;
  box-shadow: inset 0 0 0 1px #fff;
}

/* Notice balloon, hangs over the status tray */
.balloon {
  position: absolute;
  right: 32px;
  bottom: 29px;
  width: 185px;
  padding: 6px 8px 10px 15px;
  border: 1px solid #000;
  border-radius: 14px;
  background: #ffffe1;
}

.balloon-head {
  display: flex;
  align-items: center;
  height: 20px;
  margin-left: -6px;
}

.balloon-head svg {
  width: 17px;
  height: 17px;
}

.balloon-head h2 {
  flex: 1;
  margin-left: 10px;
}

.balloon-head button {
  width: 16px;
  height: 16px;
  border: 1px solid #aca899;
  background: #ece9d8;
}

.balloon-head button svg {
  width: 14px;
  height: 14px;
}

.balloon p {
  margin: 3px 0 2px;
  white-space: nowrap;
}

.balloon a {
  display: inline-block;
  color: #00f;
}

.tail {
  position: absolute;
  top: 100%;
  right: 41px;
  width: 18px;
  height: 20px;
  overflow: visible;
}
```
